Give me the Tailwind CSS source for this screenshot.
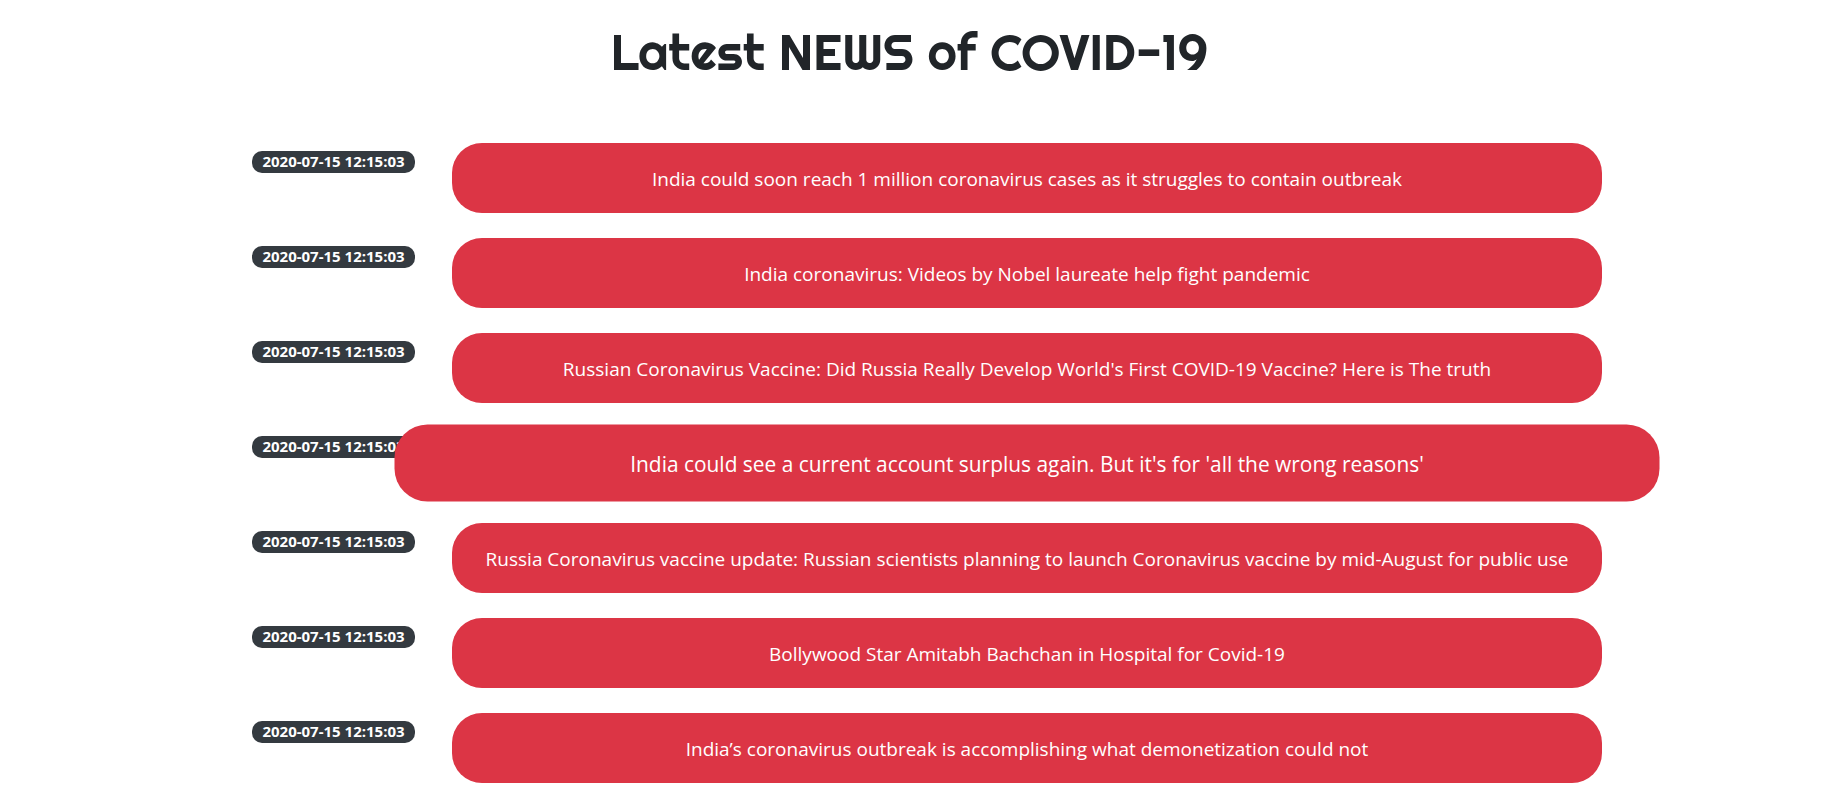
<!DOCTYPE html>
<html lang="en">
<head>
<meta charset="utf-8">
<meta name="viewport" content="width=device-width, initial-scale=1">
<title>Latest NEWS of COVID-19</title>
<script src="https://cdn.jsdelivr.net/npm/@tailwindcss/browser@4"></script>
</head>
<body class="bg-white font-['Segoe_UI','Open_Sans',sans-serif] text-[#212529]">
<main class="pt-5 pb-4">
  <h1 class="pr-6 text-center font-['Righteous','Lato',sans-serif] text-[50px] leading-[64px] font-normal">Latest NEWS of COVID-19</h1>
  <ul class="mt-[59px] flex flex-col gap-[25px] pr-[241px] pl-[252px]">
    <li class="flex items-start gap-[37px]">
      <time class="mt-2 w-[163px] shrink-0 rounded-[10px] bg-[#343a40] pb-[2px] text-center text-[15px] leading-[20px] font-bold whitespace-nowrap text-white">2020-07-15 12:15:03</time>
      <a href="#" class="flex-1 rounded-[30px] bg-[#dc3545] px-5 pt-[21px] pb-[19px] text-center text-[19px] leading-[30px] text-white">India could soon reach 1 million coronavirus cases as it struggles to contain outbreak</a>
    </li>
    <li class="flex items-start gap-[37px]">
      <time class="mt-2 w-[163px] shrink-0 rounded-[10px] bg-[#343a40] pb-[2px] text-center text-[15px] leading-[20px] font-bold whitespace-nowrap text-white">2020-07-15 12:15:03</time>
      <a href="#" class="flex-1 rounded-[30px] bg-[#dc3545] px-5 pt-[21px] pb-[19px] text-center text-[19px] leading-[30px] text-white">India coronavirus: Videos by Nobel laureate help fight pandemic</a>
    </li>
    <li class="flex items-start gap-[37px]">
      <time class="mt-2 w-[163px] shrink-0 rounded-[10px] bg-[#343a40] pb-[2px] text-center text-[15px] leading-[20px] font-bold whitespace-nowrap text-white">2020-07-15 12:15:03</time>
      <a href="#" class="flex-1 rounded-[30px] bg-[#dc3545] px-5 pt-[21px] pb-[19px] text-center text-[19px] leading-[30px] text-white">Russian Coronavirus Vaccine: Did Russia Really Develop World's First COVID-19 Vaccine? Here is The truth</a>
    </li>
    <li class="flex items-start gap-[37px]">
      <time class="mt-2 w-[163px] shrink-0 rounded-[10px] bg-[#343a40] pb-[2px] text-center text-[15px] leading-[20px] font-bold whitespace-nowrap text-white">2020-07-15 12:15:03</time>
      <a href="#" class="flex-1 scale-110 rounded-[30px] bg-[#dc3545] px-5 pt-[21px] pb-[19px] text-center text-[19px] leading-[30px] text-white">India could see a current account surplus again. But it's for 'all the wrong reasons'</a>
    </li>
    <li class="flex items-start gap-[37px]">
      <time class="mt-2 w-[163px] shrink-0 rounded-[10px] bg-[#343a40] pb-[2px] text-center text-[15px] leading-[20px] font-bold whitespace-nowrap text-white">2020-07-15 12:15:03</time>
      <a href="#" class="flex-1 rounded-[30px] bg-[#dc3545] px-5 pt-[21px] pb-[19px] text-center text-[19px] leading-[30px] text-white">Russia Coronavirus vaccine update: Russian scientists planning to launch Coronavirus vaccine by mid-August for public use</a>
    </li>
    <li class="flex items-start gap-[37px]">
      <time class="mt-2 w-[163px] shrink-0 rounded-[10px] bg-[#343a40] pb-[2px] text-center text-[15px] leading-[20px] font-bold whitespace-nowrap text-white">2020-07-15 12:15:03</time>
      <a href="#" class="flex-1 rounded-[30px] bg-[#dc3545] px-5 pt-[21px] pb-[19px] text-center text-[19px] leading-[30px] text-white">Bollywood Star Amitabh Bachchan in Hospital for Covid-19</a>
    </li>
    <li class="flex items-start gap-[37px]">
      <time class="mt-2 w-[163px] shrink-0 rounded-[10px] bg-[#343a40] pb-[2px] text-center text-[15px] leading-[20px] font-bold whitespace-nowrap text-white">2020-07-15 12:15:03</time>
      <a href="#" class="flex-1 rounded-[30px] bg-[#dc3545] px-5 pt-[21px] pb-[19px] text-center text-[19px] leading-[30px] text-white">India’s coronavirus outbreak is accomplishing what demonetization could not</a>
    </li>
  </ul>
</main>
</body>
</html>
